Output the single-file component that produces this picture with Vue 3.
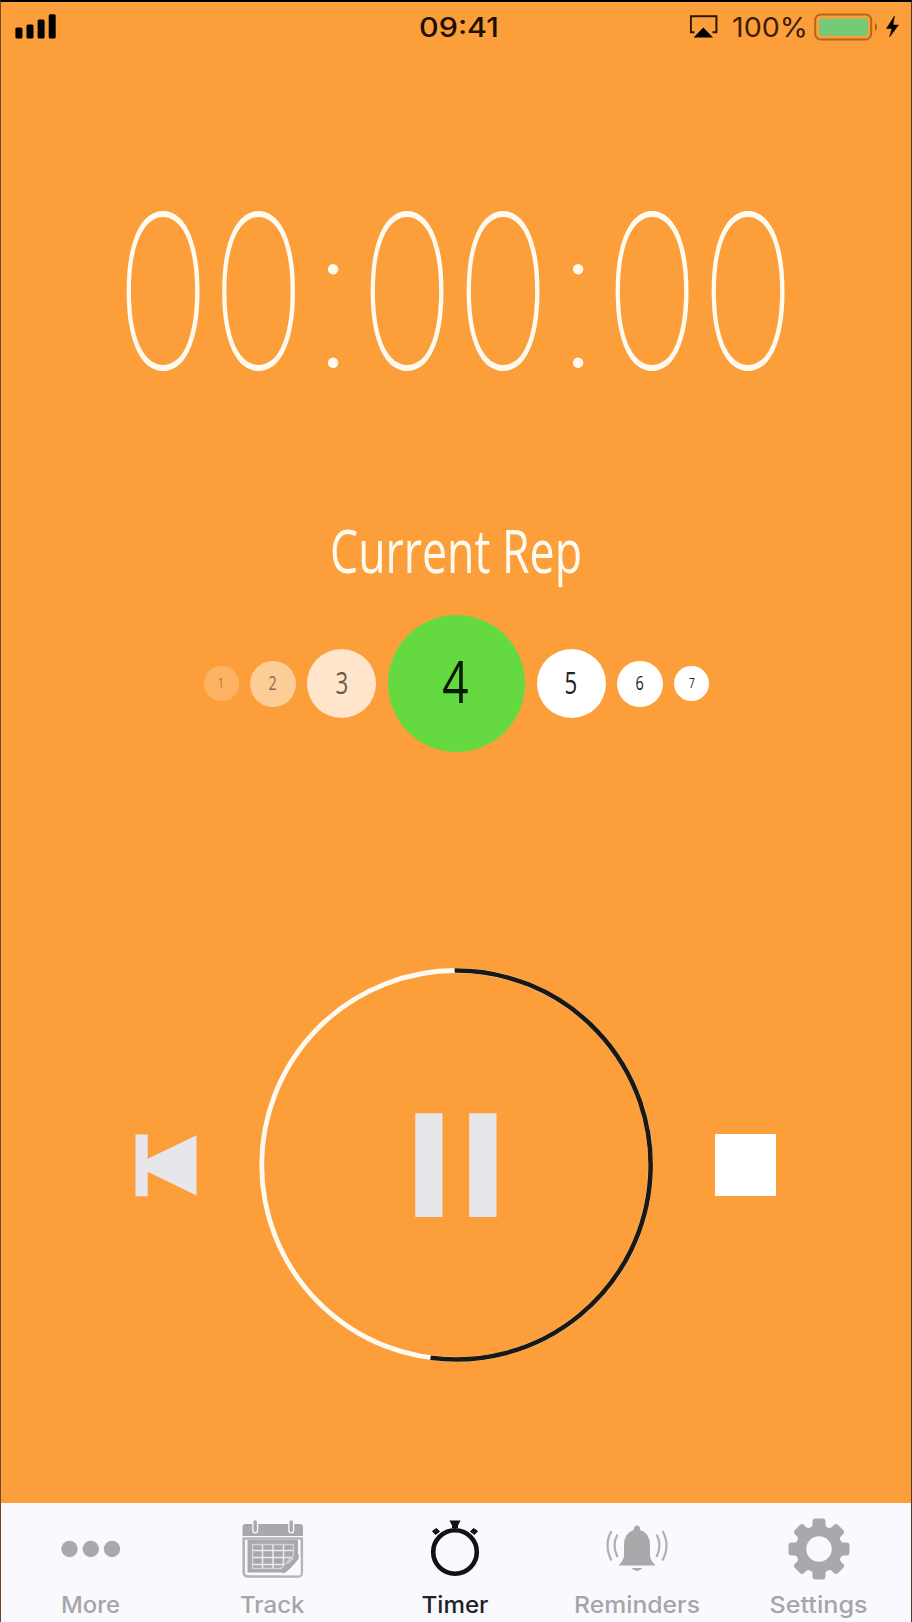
<script setup>
const clock = [
  { ch: '0', x: 162 }, { ch: '0', x: 257.5 }, { ch: ':', x: 332 },
  { ch: '0', x: 406 }, { ch: '0', x: 502 }, { ch: ':', x: 577 },
  { ch: '0', x: 651 }, { ch: '0', x: 747 }
]
const reps = [
  { n: 1, cls: 'xs f1' }, { n: 2, cls: 'sm f2' }, { n: 3, cls: 'md f3' },
  { n: 4, cls: 'lg' }, { n: 5, cls: 'md' }, { n: 6, cls: 'sm' }, { n: 7, cls: 'xs' }
]
const teeth = [0, 45, 90, 135, 180, 225, 270, 315]
</script>

<template>
  <div class="screen">
    <header class="status">
      <svg class="signal" width="42" height="26" viewBox="0 0 42 26">
        <rect x="0.4" y="14.4" width="7" height="11" rx="1.5" />
        <rect x="11.5" y="11.4" width="7" height="14" rx="1.5" />
        <rect x="22.6" y="6.4" width="7" height="19" rx="1.5" />
        <rect x="33.7" y="1.2" width="7" height="24.2" rx="1.5" />
      </svg>
      <svg class="time" width="84" height="40" viewBox="0 0 84 40">
        <text x="0" y="29.7" textLength="80" lengthAdjust="spacingAndGlyphs">09:41</text>
      </svg>
      <svg class="right" width="214" height="40" viewBox="0 0 214 40">
        <path d="M4.5 25.2H0.8V9.2H26.4V25.2H22.5" fill="none" stroke="#2a1503" stroke-width="2" />
        <path d="M13.3 20.5L23 30.5H3.6Z" />
        <text class="pct" x="42" y="29.7" textLength="76" lengthAdjust="spacingAndGlyphs">100%</text>
        <rect x="125.2" y="7.5" width="56" height="25" rx="5.5" fill="none" stroke="#b0681c" stroke-width="2" />
        <rect x="129" y="11.4" width="49" height="17.4" rx="2" fill="#75ca78" />
        <path d="M185 15.5Q189.5 19.7 185 24.5Z" fill="#b0681c" />
        <path d="M204.5 9L196.5 21.5H202L199.5 30L208.5 18H203Z" stroke="#000" stroke-width=".5" />
      </svg>
    </header>

    <svg class="clock" width="910" height="320" viewBox="0 130 910 320">
      <text v-for="(c, i) in clock" :key="i" :class="c.ch === ':' ? 'colon' : 'digit'"
        :transform="`translate(${c.x} 368.3) scale(${c.ch === ':' ? 1 : 0.65} 1)`">{{ c.ch }}</text>
    </svg>

    <svg class="title" width="400" height="100" viewBox="0 0 400 100">
      <text x="74" y="73" textLength="252" lengthAdjust="spacingAndGlyphs">Current Rep</text>
    </svg>

    <div class="reps">
      <div v-for="r in reps" :key="r.n" class="rep" :class="r.cls"><span>{{ r.n }}</span></div>
    </div>

    <div class="controls">
      <svg class="back" width="62" height="64" viewBox="0 -1 62 64">
        <path d="M.5 .5H12.7V24.7L61.5 1.3V61.5L12.7 37.7V62.2H.5Z" fill="#e7e6ea" />
      </svg>
      <svg class="ring" width="396" height="396" viewBox="-198.2 -198 396 396">
        <circle r="194.5" fill="none" stroke="#fffaf0" stroke-width="4.8" />
        <path d="M-1.5 -194.5A194.5 194.5 0 1 1 -25.7 192.8" fill="none" stroke="#1b1712" stroke-width="4.6" />
        <path d="M-40.9 -51.7H-13.7V52H-40.9ZM13 -51.7H40.3V52H13Z" fill="#e7e6ea" />
      </svg>
      <div class="stop"></div>
    </div>

    <nav class="tabs">
      <div class="tab">
        <svg width="80" height="66" viewBox="0 0 80 66">
          <circle cx="19.5" cy="33" r="8.2" /><circle cx="40.8" cy="33" r="8.2" /><circle cx="62" cy="33" r="8.2" />
        </svg>
        <svg class="label" width="140" height="40"><text x="41" y="25" textLength="59" lengthAdjust="spacingAndGlyphs">More</text></svg>
      </div>
      <div class="tab">
        <svg width="80" height="66" viewBox="-1 0 80 66">
          <path d="M9.5 20V11Q9.5 8 12.5 8H67Q70 8 70 11V20Z" />
          <path d="M22.2 7V14.5M58.2 7V14.5" stroke="#f9f9fe" stroke-width="6" stroke-linecap="round" />
          <path d="M22.2 6V14.5M58.2 6V14.5" stroke="#a9a9ac" stroke-width="3.4" stroke-linecap="round" />
          <path d="M10.7 22.5V56Q10.7 60.5 15 60.5H64.5Q68.8 60.5 68.8 56V22.5Z" fill="none" stroke="#b4b4b8" stroke-width="2.6" />
          <path d="M14.5 24H65V42L50 56.5H14.5Z" />
          <path d="M19.5 28.5H60.5V39L48 52.5H19.5Z" fill="none" stroke="#d4d4d8" stroke-width="1.3" />
          <path d="M19.5 34.5H60M19.5 41.5H58M19.5 48.5H51M29.5 29V52M40 29V52M50.5 29V48" stroke="#ececf0" stroke-width="1.5" />
          <path d="M49 56.5L53.5 46.5Q61 47 65.8 38V57H49Z" fill="#a9a9ac" />
          <path d="M54 48L60.5 42" stroke="#dcdce0" stroke-width="1.3" />
          <path d="M48 59.2Q58 54 67.5 40V59.2Z" fill="#f9f9fe" />
        </svg>
        <svg class="label" width="140" height="40"><text x="38" y="25" textLength="64.5" lengthAdjust="spacingAndGlyphs">Track</text></svg>
      </div>
      <div class="tab active">
        <svg width="80" height="66" viewBox="-1 0 80 66">
          <circle cx="40" cy="36" r="21.8" fill="none" stroke="#111116" stroke-width="4.6" />
          <path d="M34.5 4.5H45.5L43 9.5V12H37V9.5Z" />
          <path d="M17.5 15L21.5 12.5L24.5 15.5L20.5 18.5ZM62.5 15L58.5 12.5L55.5 15.5L59.5 18.5Z" stroke="#111116" />
        </svg>
        <svg class="label" width="140" height="40"><text x="37.5" y="25" textLength="67" lengthAdjust="spacingAndGlyphs">Timer</text></svg>
      </div>
      <div class="tab">
        <svg width="80" height="66" viewBox="-1 0 80 66">
          <path d="M40 9.5Q43.2 9.5 43.2 14Q53 17 53 29V39Q53 44 58.5 49.5H21.5Q27 44 27 39V29Q27 17 36.8 14Q36.8 9.5 40 9.5Z" />
          <path d="M34.500 52H45.500Q40 58 34.500 52Z" />
          <path d="M20.500 18.500Q14.500 29 20.500 41M14.500 15Q6.500 29 14.500 44.500M59.500 18.500Q65.500 29 59.500 41M65.500 15Q73.500 29 65.500 44.500" fill="none" stroke="#b0b0b3" stroke-width="2.2" />
        </svg>
        <svg class="label" width="140" height="40"><text x="8" y="25" textLength="126" lengthAdjust="spacingAndGlyphs">Reminders</text></svg>
      </div>
      <div class="tab">
        <svg width="80" height="66" viewBox="-1 0 80 66">
          <g transform="translate(40 33)">
            <circle r="18" fill="none" stroke="#a9a9ac" stroke-width="10.5" />
            <path v-for="t in teeth" :key="t" :transform="`rotate(${t})`" d="M-8.500 -20L-6.500 -24V-27.500Q-6.500 -30.500 -3.500 -30.500H3.500Q6.500 -30.500 6.500 -27.500V-24L8.500 -20Z" />
          </g>
        </svg>
        <svg class="label" width="140" height="40"><text x="21.500" y="25" textLength="98" lengthAdjust="spacingAndGlyphs">Settings</text></svg>
      </div>
    </nav>
  </div>
</template>

<style>
body { margin: 0; background: #fc9f3b; }
</style>

<style scoped>
.screen {
  box-sizing: border-box;
  width: 912px;
  height: 1622px;
  background: #fc9f3b;
  border-top: 2px solid #000;
  border-left: 1px solid #6d4a29;
  border-right: 1px solid #4d3a28;
  display: flex;
  flex-direction: column;
  align-items: center;
  overflow: hidden;
}
svg { display: block; flex: none; }
.status {
  width: 100%;
  height: 48px;
  display: grid;
  grid-template-columns: 405px 1fr 221px;
  align-items: start;
}
.signal { margin: 11px 0 0 14px; }
.time { margin: 5px 0 0 13px; }
.right { margin-top: 5px; }
.time text { font: 500 27px Inter, sans-serif; fill: #1d0f02; }
.right .pct { font: 400 27px Inter, sans-serif; fill: #3a1e05; }
.clock { margin-top: 80px; }
.digit {
  font: 100 218px Lato, sans-serif;
  fill: #fffaf0;
  stroke: #fffaf0;
  stroke-width: 3.2px;
  vector-effect: non-scaling-stroke;
  text-anchor: middle;
}
/* the background-coloured outline trims the dots to a smaller radius */
.colon { font: 100 223px Lato, sans-serif; fill: #fffaf0; stroke: #fc9f3b; stroke-width: 4px; text-anchor: middle; }
.title { margin-top: 50px; }
.title text { font: 400 61px "Open Sans", sans-serif; fill: #fffaf0; }
.reps {
  margin-top: 15px;
  margin-left: 1px;
  height: 137px;
  width: 505px;
  display: flex;
  align-items: center;
  justify-content: space-between;
}
.rep {
  border-radius: 50%;
  background: #fff;
  color: #222;
  display: flex;
  align-items: center;
  justify-content: center;
  font-family: "Open Sans", sans-serif;
  line-height: 1;
}
.rep span { transform: scaleX(0.72); padding-bottom: 2px; }
.xs { width: 34.5px; height: 35px; font-size: 14px; }
.sm { width: 45.5px; height: 46px; font-size: 20px; }
.md { width: 69px; height: 69px; font-size: 31px; }
.lg { width: 137px; height: 137px; font-size: 59px; background: #65da40; color: #041a00; }
.lg span { padding: 0 4px 7px 0; transform: scaleX(0.78); }
.f1 { background: #fdb361; color: #a8733a; }
.f2 { background: #fdcd97; color: #8e6d4c; }
.f3 { background: #fee5cb; color: #6d5a49; }
.controls {
  margin-top: 215px;
  margin-left: -1px;
  width: 641px;
  display: flex;
  align-items: center;
  justify-content: space-between;
}
.stop { width: 61px; height: 62px; background: #fff; }
.tabs {
  margin-top: auto;
  width: 100%;
  height: 119.5px;
  background: #f9f9fe;
  display: grid;
  grid-template-columns: 180px repeat(4, 182px);
  fill: #a9a9ac;
}
.tab { display: flex; flex-direction: column; align-items: center; padding-top: 13.5px; min-width: 0; }
.tab:first-child { margin-left: -2px; }
.label { margin-top: 6px; }
.label text { font: 500 23px Inter, sans-serif; fill: #a6a6a9; }
.active { fill: #111116; }
.active .label text { fill: #222226; }
</style>
